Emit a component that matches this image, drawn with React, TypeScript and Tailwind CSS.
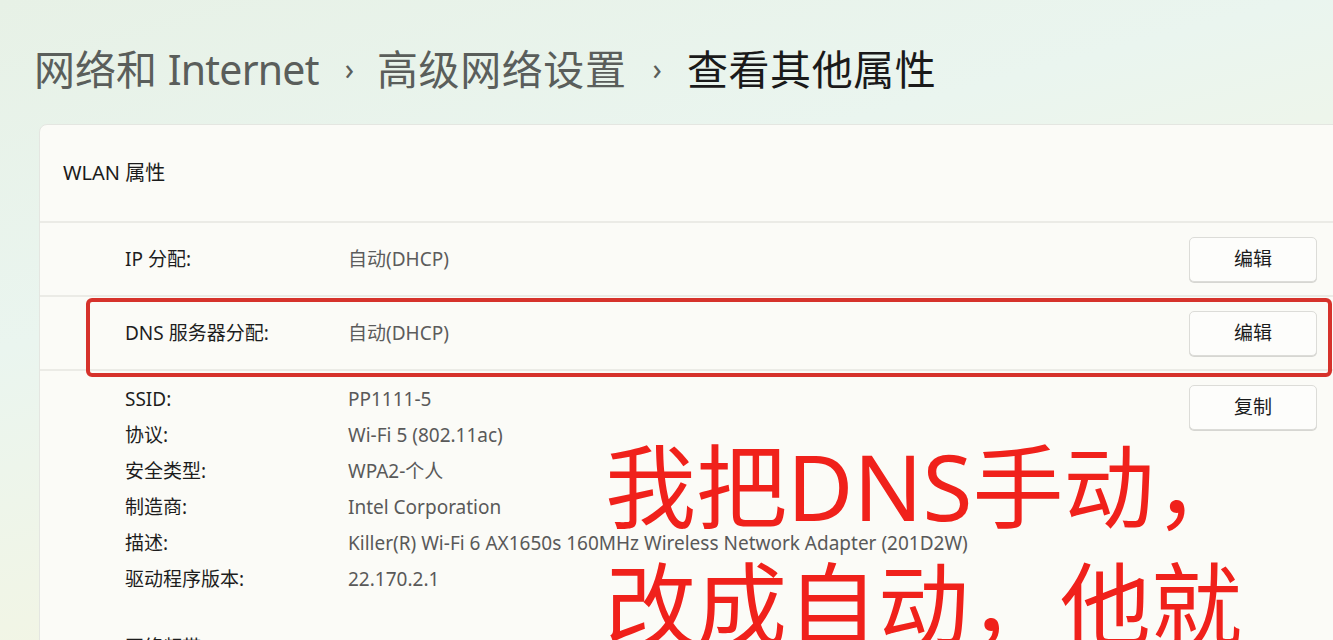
import React from "react";

const info = [
  { label: "SSID:", value: "PP1111-5" },
  { label: "协议:", value: "Wi-Fi 5 (802.11ac)" },
  { label: "安全类型:", value: "WPA2-个人" },
  { label: "制造商:", value: "Intel Corporation" },
  { label: "描述:", value: "Killer(R) Wi-Fi 6 AX1650s 160MHz Wireless Network Adapter (201D2W)" },
  { label: "驱动程序版本:", value: "22.170.2.1" },
];

function Btn({ text }: { text: string }) {
  return (
    <button className="w-[128px] h-[45px] rounded-[5px] border border-[#dcdcd8] bg-[#fdfdfb] text-[19px] text-[#1b1b1b] shadow-[0_1px_0_#d6d6d2]">
      {text}
    </button>
  );
}

function SettingRow({ label, value, btn }: { label: string; value: string; btn: string }) {
  return (
    <div className="flex items-center h-[74px] pl-[85px] pr-[21px] border-t-2 border-[#ebebe6]">
      <div className="w-[223px] text-[19px] text-[#1d1d1d]">{label}</div>
      <div className="flex-1 text-[19px] text-[#5c5c5c]">{value}</div>
      <Btn text={btn} />
    </div>
  );
}

export default function App() {
  return (
    <div
      className="relative w-[1333px] h-[640px] overflow-hidden bg-[linear-gradient(165deg,#e7f1e6_0%,#eaf5ef_35%,#f4f5e2_75%,#f5f3dc_100%)]"
      style={{ fontFamily: '"Noto Sans", "Noto Sans CJK SC", sans-serif' }}
    >
      <div className="flex items-center h-[124px] pl-[34px] pt-[14px] text-[41px] leading-none">
        <span className="text-[#5a5e5b]">
          网络和 <span className="tracking-[-0.8px]">Internet</span>
        </span>
        <span className="ml-[26px] mr-[23px] text-[30px] text-[#5a5e5b]">›</span>
        <span className="text-[#5a5e5b] tracking-[0.6px]">高级网络设置</span>
        <span className="ml-[26px] mr-[25px] text-[30px] text-[#5a5e5b]">›</span>
        <span className="text-[#1a1a1a] tracking-[0.6px]">查看其他属性</span>
      </div>

      <div className="ml-[39px] w-[1300px] h-[540px] rounded-tl-[8px] border border-[#e4e6e1] bg-[#fbfbf7]">
        <div className="flex items-center h-[96px] pl-[23px] text-[20px] text-[#1b1b1b]">WLAN 属性</div>
        <SettingRow label="IP 分配:" value="自动(DHCP)" btn="编辑" />
        <SettingRow label="DNS 服务器分配:" value="自动(DHCP)" btn="编辑" />
        <div className="flex pl-[85px] pr-[21px] pt-[10px] border-t-2 border-[#ebebe6]">
          <div className="flex flex-col">
            {info.map((r) => (
              <div key={r.label} className="flex items-center h-[36px] text-[19px]">
                <div className="w-[223px] text-[#1d1d1d]">{r.label}</div>
                <div className="text-[#595959] whitespace-nowrap">{r.value}</div>
              </div>
            ))}
            <div className="flex items-center h-[36px] mt-[32px] text-[19px]">
              <div className="w-[223px] text-[#1d1d1d]">网络频带:</div>
              <div className="text-[#595959]">5 GHz</div>
            </div>
          </div>
          <div className="ml-auto pt-[4px]">
            <Btn text="复制" />
          </div>
        </div>
      </div>

      <div className="absolute left-[86px] top-[298px] w-[1246px] h-[79px] rounded-[6px] border-[4px] border-[#d6322b]" />

      <div className="absolute left-[605px] top-[427px] text-[91px] leading-[118px] text-[#f0211b] whitespace-nowrap">
        <div>我把DNS手动，</div>
        <div>改成自动，他就</div>
      </div>
    </div>
  );
}
